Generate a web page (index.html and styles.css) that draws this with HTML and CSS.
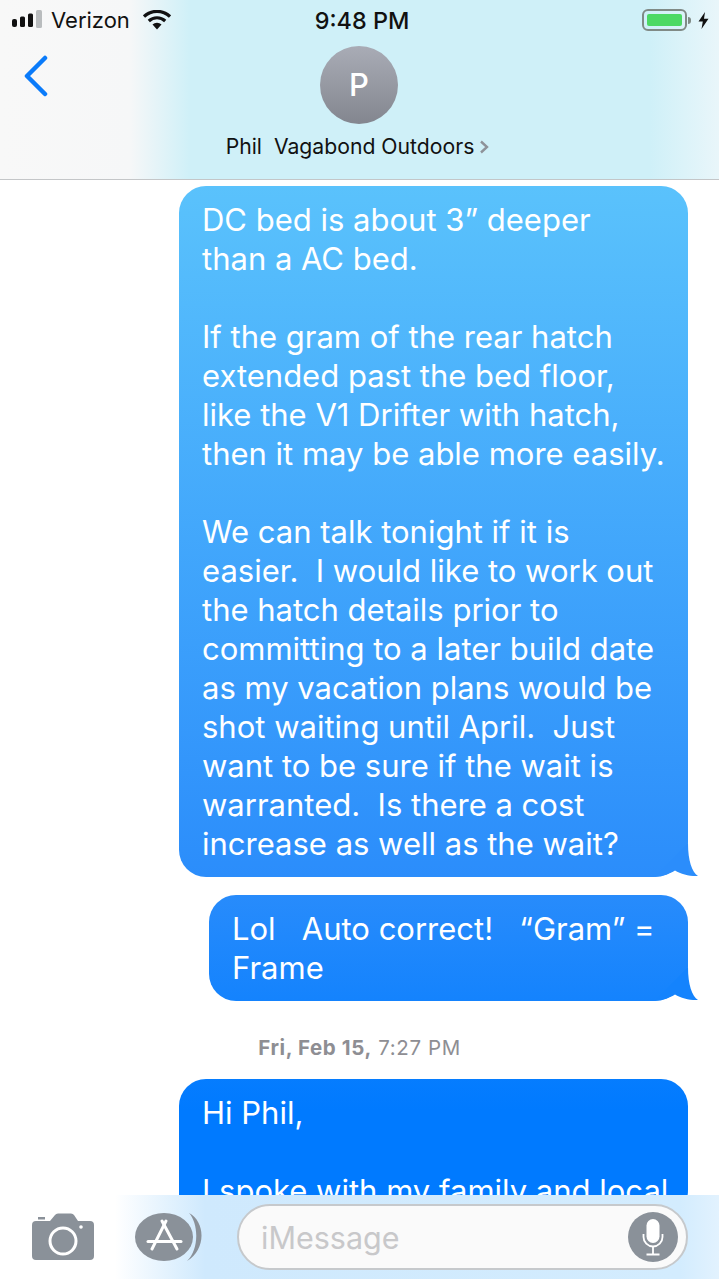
FILE: index.html
```html
<!DOCTYPE html>
<html lang="en">
<head>
    <meta charset="UTF-8">
    <meta name="viewport" content="width=device-width, initial-scale=1.0">
    <title>Messages</title>
    <link rel="stylesheet" href="styles.css">
</head>
<body>

<div class="phone">
    <header class="top-bar">
        <div class="status-bar">
            <div class="status-left">
                <svg class="signal" width="32" height="20" viewBox="0 0 32 20">
                    <rect x="1" y="9" width="5" height="8" rx="2" fill="#111"/>
                    <rect x="9" y="6.500" width="5" height="10.500" rx="1.500" fill="#111"/>
                    <rect x="17" y="3.500" width="5" height="13.500" rx="1.500" fill="#111"/>
                    <rect x="25" y="0" width="6" height="18" rx="1.500" fill="#b9bcbe"/>
                </svg>
                <span class="carrier">Verizon</span>
                <svg class="wifi" width="28" height="20" viewBox="0 0 28 20">
                    <path d="M1 6.500 A19 19 0 0 1 27 6.500" fill="none" stroke="#111" stroke-width="3.200"/>
                    <path d="M5.800 11 A12 12 0 0 1 22.200 11" fill="none" stroke="#111" stroke-width="3.200"/>
                    <path d="M9.500 14.500 A6.500 6.500 0 0 1 18.500 14.500 L14 19.500 Z" fill="#111"/>
                </svg>
            </div>
            <div class="clock">9:48 PM</div>
            <div class="status-right">
                <div class="battery"><div class="battery-fill"></div></div>
                <div class="battery-tip"></div>
                <svg class="bolt" width="11" height="17" viewBox="0 0 11 17">
                    <path d="M7 0 L0.500 9.500 H4.800 L3.500 17 L10.500 6.800 H6 Z" fill="#111"/>
                </svg>
            </div>
        </div>
        <div class="contact-row">
            <svg class="back" width="26" height="42" viewBox="0 0 26 42">
                <path d="M22 3 L4 21 L22 39" fill="none" stroke="#0a7bfa" stroke-width="4.500" stroke-linecap="round" stroke-linejoin="round"/>
            </svg>
            <div class="contact">
                <div class="avatar">P</div>
                <div class="contact-name">
                    <span>Phil  Vagabond Outdoors</span>
                    <svg class="name-arrow" width="10" height="14" viewBox="0 0 10 14">
                        <path d="M2 1.500 L8 7 L2 12.500" fill="none" stroke="#8e9299" stroke-width="2.400"/>
                    </svg>
                </div>
            </div>
        </div>
    </header>

    <main class="thread">
        <div class="bubble bubble-wide">DC bed is about 3” deeper
than a AC bed.

If the gram of the rear hatch
extended past the bed floor,
like the V1 Drifter with hatch,
then it may be able more easily.

We can talk tonight if it is
easier.  I would like to work out
the hatch details prior to
committing to a later build date
as my vacation plans would be
shot waiting until April.  Just
want to be sure if the wait is
warranted.  Is there a cost
increase as well as the wait?<svg class="tail" width="44" height="34" viewBox="0 0 44 34"><path d="M34 0 C34 18 38 29 44 33 C36 33.500 27 31 21 27.500 C16 31 8 33 0 34 Z" fill="#2b8dfb"/></svg></div>

        <div class="bubble bubble-short">Lol   Auto correct!   “Gram” =
Frame<svg class="tail" width="44" height="34" viewBox="0 0 44 34"><path d="M34 0 C34 18 38 29 44 33 C36 33.500 27 31 21 27.500 C16 31 8 33 0 34 Z" fill="#1483fd"/></svg></div>

        <div class="timestamp"><b>Fri, Feb 15,</b> 7:27 PM</div>

        <div class="bubble bubble-wide">Hi Phil,

I spoke with my family and local</div>
    </main>

    <footer class="composer">
        <svg class="camera" width="62" height="48" viewBox="0 0 62 48">
            <path d="M6 6.500 H13 V4 H6 Z" fill="#8a9199"/>
            <path d="M4 8 H18 L23 2 Q24 0.500 26 0.500 H39 Q41 0.500 42 2 L46 8 H58 Q62 8 62 12 V43 Q62 47 58 47 H4 Q0 47 0 43 V12 Q0 8 4 8 Z" fill="#8a9199"/>
            <circle cx="31" cy="28" r="13" fill="none" stroke="#fff" stroke-width="3"/>
            <circle cx="49" cy="14" r="1.800" fill="#fff"/>
        </svg>
        <svg class="apps" width="68" height="50" viewBox="0 0 68 50">
            <path d="M54 1 C71 10 71 38 52 49 C64 38 64 12 54 1 Z" fill="#8a9199"/>
            <ellipse cx="29" cy="25" rx="29" ry="24" fill="#8a9199"/>
            <g fill="none" stroke="#fff" stroke-width="3" stroke-linecap="round">
                <path d="M31 9 L17 37"/>
                <path d="M27 9 L42 37"/>
                <path d="M13 29.500 H46"/>
            </g>
        </svg>
        <div class="message-box">
            <span class="placeholder">iMessage</span>
            <div class="mic">
                <svg width="26" height="38" viewBox="0 0 26 38">
                    <rect x="6.500" y="1" width="13" height="24" rx="6.500" fill="#fff"/>
                    <path d="M3.500 16 V19 A9.500 9.500 0 0 0 22.500 19 V16" fill="none" stroke="#fff" stroke-width="1.800"/>
                    <path d="M13 28.500 V36 M6.500 36.500 H19.500" fill="none" stroke="#fff" stroke-width="1.800"/>
                </svg>
            </div>
        </div>
    </footer>
</div>

</body>
</html>
```

FILE: styles.css
```css
* {
    box-sizing: border-box;
}
html, body {
    height: 100%;
}
body {
    margin: 0;
    overflow: hidden;
    background: #fff;
    font-family: Inter, "Liberation Sans", sans-serif;
}
.phone {
    display: flex;
    flex-direction: column;
    height: 100vh;
}

/* top bar */
.top-bar {
    height: 180px;
    flex-shrink: 0;
    padding: 0 10px 0 11px;
    border-bottom: 1px solid #c4c6c8;
    background: linear-gradient(90deg, #f8f8f8 0, #f6f7f8 130px, #cff0f8 190px, #cff0f8 650px, #e9f6fa 719px);
    color: #111;
}
.status-bar {
    display: grid;
    grid-template-columns: 1fr auto 1fr;
    align-items: center;
    height: 40px;
}
.status-left {
    display: flex;
    align-items: center;
}
.signal {
    margin-right: 8px;
}
.carrier {
    font-size: 22px;
    margin-right: 13px;
}
.clock {
    margin-left: 4px;
    font-size: 23.400px;
    font-weight: 500;
}
.status-right {
    display: flex;
    align-items: center;
    justify-content: flex-end;
}
.battery {
    width: 45px;
    height: 22px;
    padding: 3px;
    border: 2px solid #808a86;
    border-radius: 6px;
}
.battery-fill {
    height: 100%;
    border-radius: 2px;
    background: #4cd964;
}
.battery-tip {
    width: 3px;
    height: 7px;
    margin: 0 7px 0 1px;
    border-radius: 0 3px 3px 0;
    background: #808a86;
}
.contact-row {
    position: relative;
    margin-right: 2px;
}
.back {
    position: absolute;
    left: 12px;
    top: 15px;
}
.contact {
    display: flex;
    flex-direction: column;
    align-items: center;
    padding-top: 6px;
}
.avatar {
    width: 78px;
    height: 78px;
    border-radius: 50%;
    background: linear-gradient(#a9acb6, #83868f);
    color: #fff;
    font-size: 31px;
    font-weight: 500;
    line-height: 78px;
    text-align: center;
}
.contact-name {
    display: flex;
    align-items: center;
    gap: 5px;
    margin: 9px 3px 0 0;
    font-size: 21.200px;
    line-height: 26px;
}
.contact-name span {
    white-space: pre;
}
.name-arrow {
    margin-top: 2px;
}

/* messages */
.thread {
    flex: 1;
    display: flex;
    flex-direction: column;
    align-items: flex-end;
    overflow: hidden;
    padding: 6px 31px 0 0;
}
.bubble {
    position: relative;
    flex-shrink: 0;
    margin-bottom: 18px;
    padding: 14px 23px;
    border-radius: 27px 27px 34px 27px;
    background: linear-gradient(#5ac2fc 186px, #2b8dfb 877px, #007aff 1110px) fixed;
    color: #fff;
    font-size: 31px;
    line-height: 39px;
    white-space: pre;
}
.bubble-wide {
    width: 509px;
}
.bubble-short {
    width: 479px;
    margin-bottom: 0;
}
.tail {
    position: absolute;
    right: -10px;
    bottom: 0;
}
.timestamp {
    align-self: flex-start;
    width: 100%;
    margin: 35px -31px 19px 0;
    padding-left: 31px;
    color: #8e8e93;
    font-size: 20.500px;
    letter-spacing: 0.600px;
    line-height: 24px;
    text-align: center;
}

/* bottom bar */
.composer {
    display: flex;
    align-items: center;
    flex-shrink: 0;
    height: 84px;
    padding: 0 31px 0 32px;
    background: linear-gradient(90deg, #fff 0, #fff 115px, #cfe9fd 205px, #d3ecfe 680px, #e2f2fe 719px);
}
.camera {
    margin-right: 41px;
}
.apps {
    margin-right: 34px;
}
.message-box {
    display: flex;
    align-items: center;
    justify-content: space-between;
    flex: 1;
    height: 66px;
    padding: 0 8px 0 22px;
    border: 2px solid #c6c9cc;
    border-radius: 33px;
    background: #fafafa;
}
.placeholder {
    color: #c8c8ca;
    font-size: 30.500px;
}
.mic {
    display: flex;
    align-items: center;
    justify-content: center;
    width: 50px;
    height: 50px;
    border-radius: 50%;
    background: #8a9199;
}
```
